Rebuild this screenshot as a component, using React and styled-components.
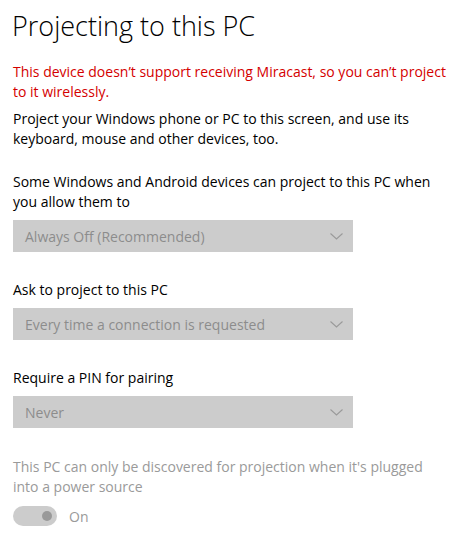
import React from 'react';
import styled, { createGlobalStyle } from 'styled-components';

const GlobalStyle = createGlobalStyle`
  html, body {
    margin: 0;
    padding: 0;
    background: #ffffff;
  }
  body {
    font-family: 'Open Sans', 'Noto Sans', sans-serif;
  }
`;

const Page = styled('div')`
  display: flex;
  flex-direction: column;
  padding: 0 0 0 13px;
  width: 467px;
  height: 537px;
  box-sizing: border-box;
  color: #000000;
`;

const Title = styled('h1')`
  margin: 6px 0 0 -1px;
  font-size: 27px;
  font-weight: 300;
  line-height: 40px;
  color: #000000;
`;

const Text = styled('p')`
  margin: ${(props) => props.gap || 0}px 0 0 0;
  font-size: 14px;
  line-height: 20px;
  color: ${(props) => props.tone || '#000000'};
  width: 447px;
`;

const Select = styled('div')`
  display: flex;
  align-items: center;
  justify-content: space-between;
  box-sizing: border-box;
  width: 340px;
  height: 32px;
  margin-top: 8px;
  padding: 0 10px 0 12px;
  background-color: #cccccc;
  color: #8c8c8c;
  font-size: 14px;
`;

const Chevron = () => (
  <svg width="13" height="7" viewBox="0 0 13 7">
    <path d="M0.5 0.5 L6.5 6 L12.5 0.5" fill="none" stroke="#9a9a9a" strokeWidth="1.1" />
  </svg>
);

const ToggleRow = styled('div')`
  display: flex;
  align-items: center;
  gap: 12px;
  margin-top: 9px;
  font-size: 14px;
  color: #9a9a9a;
`;

const Track = styled('div')`
  display: flex;
  align-items: center;
  justify-content: flex-end;
  box-sizing: border-box;
  width: 44px;
  height: 20px;
  padding-right: 5px;
  border-radius: 10px;
  background-color: #cccccc;
`;

const Knob = styled('div')`
  width: 10px;
  height: 10px;
  border-radius: 50%;
  background-color: #999999;
`;

export default function App() {
  return (
    <Page>
      <GlobalStyle />
      <Title>Projecting to this PC</Title>
      <Text gap={16} tone="#d40000">
        This device doesn’t support receiving Miracast, so you can’t project<br />
        to it wirelessly.
      </Text>
      <Text gap={7}>
        Project your Windows phone or PC to this screen, and use its<br />
        keyboard, mouse and other devices, too.
      </Text>
      <Text gap={23}>
        Some Windows and Android devices can project to this PC when<br />
        you allow them to
      </Text>
      <Select>
        <span>Always Off (Recommended)</span>
        <Chevron />
      </Select>
      <Text gap={28}>Ask to project to this PC</Text>
      <Select>
        <span>Every time a connection is requested</span>
        <Chevron />
      </Select>
      <Text gap={28}>Require a PIN for pairing</Text>
      <Select>
        <span>Never</span>
        <Chevron />
      </Select>
      <Text gap={29} tone="#9a9a9a">
        This PC can only be discovered for projection when it's plugged<br />
        into a power source
      </Text>
      <ToggleRow>
        <Track>
          <Knob />
        </Track>
        <span>On</span>
      </ToggleRow>
    </Page>
  );
}
